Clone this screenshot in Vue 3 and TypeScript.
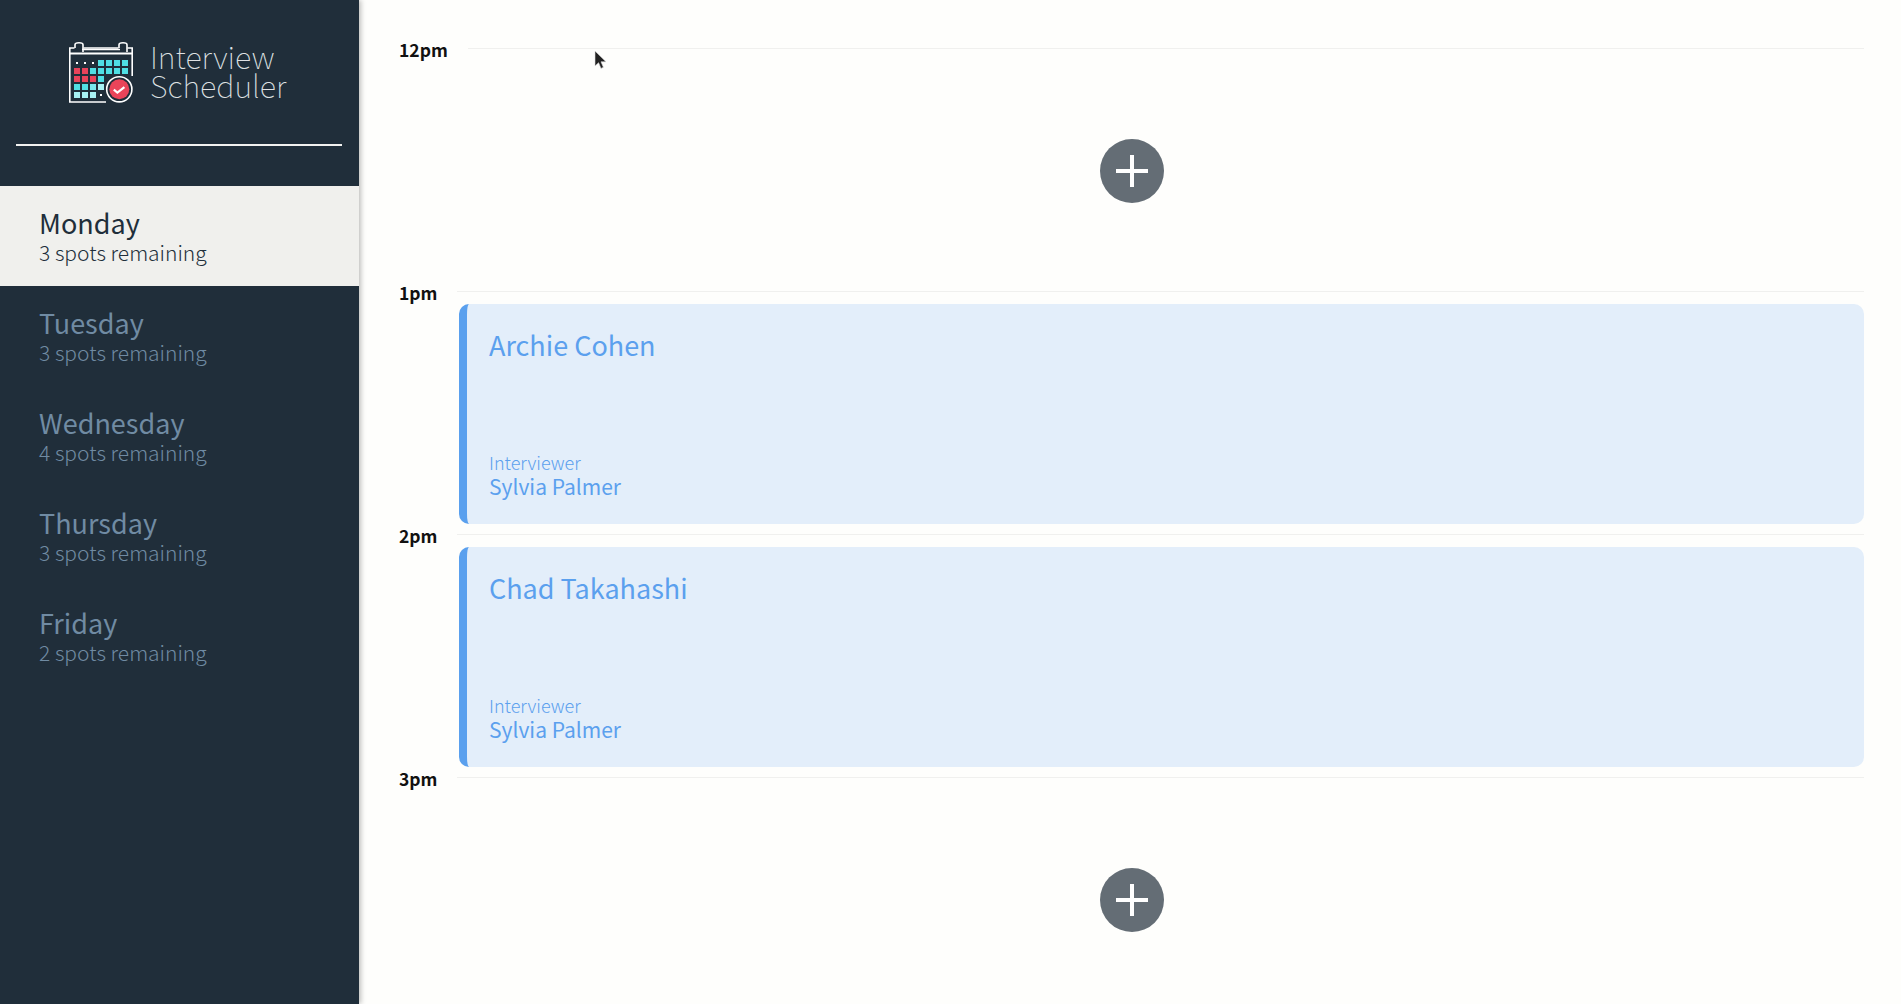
<template>
  <div class="layout">
    <!-- Sidebar -->
    <nav class="sidebar">
      <div class="brand">
        <svg class="logo" width="66" height="62" viewBox="68 41 66 62">
          <g fill="none" stroke="#fff" stroke-width="1.6">
            <path d="M106 101H69.8V47H74.5M83.5 47H118.5M127.5 47H132.2V75" />
            <path d="M69.8 52.5H132.2" stroke-width="2" />
            <path d="M75 47V43.8a4 2 0 0 1 8 0V51M119 47V43.8a4 2 0 0 1 8 0V51" />
            <path d="M82 48.5H120" />
          </g>
          <rect
            v-for="cell in logoCells"
            :key="cell.key"
            :x="cell.x"
            :y="cell.y"
            :width="cell.size"
            :height="cell.size"
            :fill="cell.color"
          />
          <circle cx="119.3" cy="88.3" r="12.6" fill="#202e3a" stroke="#fff" stroke-width="1.6" />
          <circle cx="119.3" cy="88.3" r="10" fill="#ea4459" />
          <path d="M113.8 88.6l3.6 2.9 7-5.4" fill="none" stroke="#fff" stroke-width="2.2" />
        </svg>
        <div class="brand-name">Interview<br />Scheduler</div>
      </div>
      <hr class="brand-rule" />
      <ul class="days">
        <li v-for="day in days" :key="day.name" class="day" :class="{ selected: day.name === 'Monday' }">
          <h2>{{ day.name }}</h2>
          <h3>{{ day.spots }} spots remaining</h3>
        </li>
      </ul>
    </nav>

    <!-- Schedule -->
    <main class="schedule">
      <article v-for="slot in slots" :key="slot.time" class="slot">
        <header class="slot-head">
          <h4>{{ slot.time }}</h4>
          <div class="slot-line"></div>
        </header>
        <section v-if="slot.student" class="booking">
          <h5>{{ slot.student }}</h5>
          <div>
            <h6>Interviewer</h6>
            <p>{{ slot.interviewer }}</p>
          </div>
        </section>
        <section v-else-if="slot.empty" class="empty">
          <svg class="add" width="64" height="64" viewBox="0 0 64 64">
            <circle cx="32" cy="32" r="32" fill="#646d75" />
            <path d="M32 16V48M16 32H48" stroke="#fff" stroke-width="4" />
          </svg>
        </section>
      </article>
    </main>

    <!-- Cursor captured in the screenshot -->
    <svg class="cursor" width="13" height="20" viewBox="0 0 13 20">
      <path d="M1 1V16L4.6 12.7 7 18.4 9.4 17.3 7 11.8H12Z" fill="#222" stroke="#ddd" stroke-width=".6" />
    </svg>
  </div>
</template>

<script setup lang="ts">
interface Day {
  name: string
  spots: number
}

interface Slot {
  time: string
  student?: string
  interviewer?: string
  empty?: boolean
}

const days: Day[] = [
  { name: 'Monday', spots: 3 },
  { name: 'Tuesday', spots: 3 },
  { name: 'Wednesday', spots: 4 },
  { name: 'Thursday', spots: 3 },
  { name: 'Friday', spots: 2 }
]

const slots: Slot[] = [
  { time: '12pm', empty: true },
  { time: '1pm', student: 'Archie Cohen', interviewer: 'Sylvia Palmer' },
  { time: '2pm', student: 'Chad Takahashi', interviewer: 'Sylvia Palmer' },
  { time: '3pm', empty: true }
]

// Calendar grid in the logo, one string per row: t teal, r red, l/m/w paler teals, d dot
const logoRows = ['dddtttt', 'rrttttt', 'rrrt', 'llmw', 'wwwd']
const logoColors: Record<string, string> = {
  t: '#4fdfe4',
  r: '#e8435a',
  l: '#52e0e5',
  m: '#78e8ec',
  w: '#a8f2f4'
}

const logoCells = logoRows.flatMap((row, y) =>
  row.split('').map((c, x) => {
    const dot = c === 'd'
    return {
      key: `${x}-${y}`,
      x: 74 + x * 8 + (dot ? 2 : 0),
      y: 59 + y * 8 + (dot ? 2 : 0),
      size: dot ? 2 : 6,
      color: dot ? '#fff' : logoColors[c]
    }
  })
)
</script>

<style scoped>
.layout {
  display: flex;
  height: 1004px;
  overflow: hidden;
  position: relative;
  background: #fefefc;
  font-family: "Noto Sans CJK SC", "Noto Sans", sans-serif;
}

.sidebar {
  width: 359px;
  flex-shrink: 0;
  background: #202e3a;
  box-shadow: 2px 0 5px rgba(0, 0, 0, 0.25);
}

.brand {
  display: flex;
  align-items: center;
  height: 144px;
  padding-left: 68px;
  padding-bottom: 2px;
  box-sizing: border-box;
}

.logo {
  margin: 3px 16px 0 0;
}

.brand-name {
  font-size: 30.6px;
  font-weight: 100;
  line-height: 29px;
  color: #dfe1e3;
}

.brand-rule {
  height: 2px;
  margin: 0 17px 40px 16px;
  border: 0;
  background: #f2f2f0;
}

.days {
  list-style: none;
  margin: 0;
  padding: 0;
}

.day {
  height: 100px;
  padding: 22px 0 0 39px;
  box-sizing: border-box;
  color: #708ba3;
}

.day h2 {
  margin: 0;
  font-size: 27px;
  font-weight: 400;
  line-height: 30px;
}

.day h3 {
  margin: 0;
  font-size: 21px;
  font-weight: 300;
  line-height: 28px;
}

.day.selected {
  background: #f0f0ed;
  color: #202e3a;
}

.schedule {
  flex: 1;
  padding: 48px 37px 0 40px;
}

.slot {
  height: 243px;
}

.slot-head {
  display: flex;
  height: 13px;
}

.slot-head h4 {
  margin: -10px 20px 0 0;
  font-size: 17.5px;
  font-weight: 700;
  line-height: 24px;
  color: #111;
}

.slot-line {
  flex: 1;
  height: 1px;
  background: #f0f0ee;
}

.booking {
  display: flex;
  flex-direction: column;
  justify-content: space-between;
  height: 220px;
  margin-left: 60px;
  padding: 23px 0 26px 22px;
  box-sizing: border-box;
  background: #e3eefa;
  border-left: 8px solid #5aa0ee;
  border-radius: 10px;
  color: #5ba0ee;
}

.booking h5 {
  margin: 0;
  font-size: 27px;
  font-weight: 400;
  line-height: 36px;
}

.booking h6 {
  margin: 0;
  font-size: 18px;
  font-weight: 300;
  line-height: 24px;
}

.booking p {
  margin: 0;
  font-size: 21px;
  font-weight: 400;
  line-height: 24px;
}

.empty {
  display: flex;
  align-items: center;
  justify-content: center;
  height: 220px;
}

.cursor {
  position: absolute;
  left: 594px;
  top: 50px;
}
</style>
